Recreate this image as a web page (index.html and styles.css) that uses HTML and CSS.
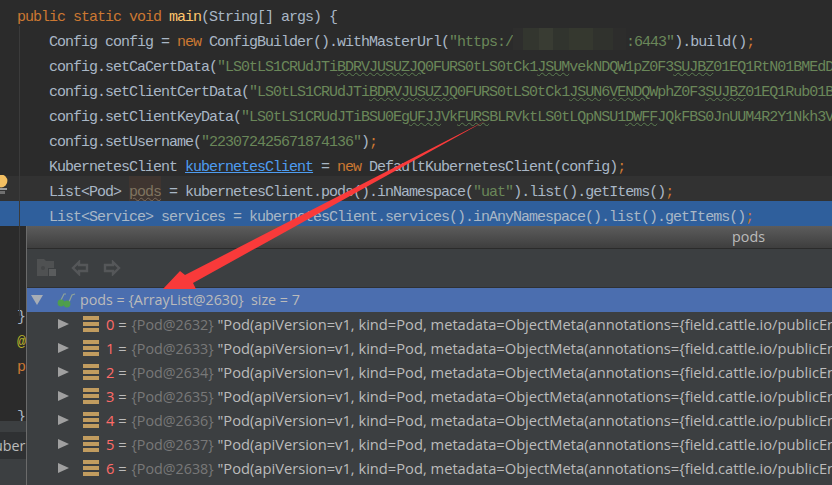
FILE: index.html
```html
<!DOCTYPE html>
<html lang="en">
<head>
<meta charset="utf-8">
<title>pods</title>
<link rel="stylesheet" href="styles.css">
</head>
<body>
<div class="screen">
  <div class="editor">
    <div class="line"><span class="kw">public static void</span> <span class="fn">main</span>(String[] args) {</div>
    <div class="line">    Config config = <span class="kw">new</span> ConfigBuilder().withMasterUrl(<span class="str">"https:/</span><span class="mosaic"></span><span class="str">:6443"</span>).build()<span class="kw">;</span></div>
    <div class="line">    config.setCaCertData(<span class="str">"LS0tLS1CRUdJTi<span class="wavy">BDRVJUSUZJQ</span>0FURS0tLS0tCk1<span class="wavy">JSUM</span>vekNDQW1pZ0F3<span class="wavy">SUJBZ</span>01EQ1RtN01BMEdDU3FHU0lb3DQE</span></div>
    <div class="line">    config.setClientCertData(<span class="str">"LS0tLS1CRUdJTi<span class="wavy">BDRVJUSUZJQ</span>0FURS0tLS0tCk1<span class="wavy">JSUN</span>6<span class="wavy">VENDQ</span>WphZ0F3<span class="wavy">SUJBZ</span>01EQ1Rub01BMEdDU3FHU0</span></div>
    <div class="line">    config.setClientKeyData(<span class="str">"LS0tLS1CRUdJTiBSU0Eg<span class="wavy">UFJJ</span>Vk<span class="wavy">FURS</span>BLRVktLS0tLQpNSU1<span class="wavy">DWFF</span>JQkFBS0JnUUM4R2Y1Nkh3VmZxQ</span></div>
    <div class="line">    config.setUsername(<span class="str">"223072425671874136"</span>)<span class="kw">;</span></div>
    <div class="line">    KubernetesClient <span class="link">kubernetesClient</span> = <span class="kw">new</span> DefaultKubernetesClient(config)<span class="kw">;</span></div>
    <div class="line caret">    List&lt;Pod&gt; <span class="unused">pods</span> = kubernetesClient.pods().inNamespace(<span class="str">"uat"</span>).list().getItems()<span class="kw">;</span></div>
    <div class="line selected">    List&lt;Service&gt; services = kubernetesClient.services().inAnyNamespace().list().getItems()<span class="kw">;</span></div>
    <div class="line"></div>
    <div class="line"></div>
    <div class="line"></div>
    <div class="line">}</div>
    <div class="line"><span class="anno">@</span></div>
    <div class="line"><span class="kw">p</span></div>
    <div class="line"></div>
    <div class="line closing">}</div>
    <div class="tabband"></div>
    <div class="tabrow">uber</div>
  </div>

  <div class="guide"></div>
  <svg class="bulb" width="8" height="20" viewBox="0 0 8 20" aria-hidden="true">
    <circle cx="1" cy="6" r="6.4" fill="#f3bf62"/>
    <rect x="-2" y="13" width="9" height="2" fill="#9b9b9b"/>
    <rect x="-2" y="16" width="7" height="3" fill="#6f6f6f"/>
  </svg>

  <section class="popup">
    <header class="popup-title">pods</header>
    <div class="toolbar">
      <svg class="tool" width="20" height="20" viewBox="0 0 20 20" aria-hidden="true">
        <path d="M0 1h7l2 2h8v7h-6v8H0z" fill="#4f5152"/>
        <circle cx="6" cy="10" r="2" fill="#444647"/>
        <rect x="12" y="11" width="7" height="7" fill="#5a5c5d"/>
      </svg>
      <svg class="tool" width="18" height="16" viewBox="0 0 18 16" aria-hidden="true">
        <path d="M8 2 2 8l6 6v-3h8V5H8z" fill="none" stroke="#555759" stroke-width="2.4"/>
      </svg>
      <svg class="tool" width="18" height="16" viewBox="0 0 18 16" aria-hidden="true">
        <path d="M10 2l6 6-6 6v-3H2V5h8z" fill="none" stroke="#555759" stroke-width="2.4"/>
      </svg>
    </div>
    <div class="tree">
      <div class="row root">
        <span class="tri down"></span>
        <svg class="glasses" width="20" height="18" viewBox="0 0 20 18" aria-hidden="true">
          <path d="M3 11 7 3h2M9 12l3-1 3-7 3-1" fill="none" stroke="#8fa39a" stroke-width="1.2"/>
          <circle cx="4" cy="12" r="3.4" fill="#4f9e4c"/>
          <circle cx="10" cy="13" r="3.4" fill="#4f9e4c"/>
        </svg>
        <span class="label">pods = {ArrayList@2630}&nbsp; size = 7</span>
      </div>
      <div class="row"><span class="tri"></span><span class="bars"></span><span class="label item"><span class="idx">0</span> = <span class="ref">{Pod@2632}</span> "Pod(apiVersion=v1, kind=Pod, metadata=ObjectMeta(annotations={field.cattle.io/publicEndpoints=[</span></div>
      <div class="row"><span class="tri"></span><span class="bars"></span><span class="label item"><span class="idx">1</span> = <span class="ref">{Pod@2633}</span> "Pod(apiVersion=v1, kind=Pod, metadata=ObjectMeta(annotations={field.cattle.io/publicEndpoints=[</span></div>
      <div class="row"><span class="tri"></span><span class="bars"></span><span class="label item"><span class="idx">2</span> = <span class="ref">{Pod@2634}</span> "Pod(apiVersion=v1, kind=Pod, metadata=ObjectMeta(annotations={field.cattle.io/publicEndpoints=[</span></div>
      <div class="row"><span class="tri"></span><span class="bars"></span><span class="label item"><span class="idx">3</span> = <span class="ref">{Pod@2635}</span> "Pod(apiVersion=v1, kind=Pod, metadata=ObjectMeta(annotations={field.cattle.io/publicEndpoints=[</span></div>
      <div class="row"><span class="tri"></span><span class="bars"></span><span class="label item"><span class="idx">4</span> = <span class="ref">{Pod@2636}</span> "Pod(apiVersion=v1, kind=Pod, metadata=ObjectMeta(annotations={field.cattle.io/publicEndpoints=[</span></div>
      <div class="row"><span class="tri"></span><span class="bars"></span><span class="label item"><span class="idx">5</span> = <span class="ref">{Pod@2637}</span> "Pod(apiVersion=v1, kind=Pod, metadata=ObjectMeta(annotations={field.cattle.io/publicEndpoints=[</span></div>
      <div class="row"><span class="tri"></span><span class="bars"></span><span class="label item"><span class="idx">6</span> = <span class="ref">{Pod@2638}</span> "Pod(apiVersion=v1, kind=Pod, metadata=ObjectMeta(annotations={field.cattle.io/publicEndpoints=[</span></div>
    </div>
  </section>

  <svg class="arrow" width="832" height="485" viewBox="0 0 832 485" aria-hidden="true">
    <polygon points="487,120 193,283 196,289 163,289 180,271 185,275" fill="#f93a3a"/>
  </svg>
</div>
</body>
</html>
```
FILE: styles.css
```css
* { box-sizing: border-box; }
html, body { margin: 0; height: 100%; overflow: hidden; background: #3c3f41; }
.screen { position: relative; width: 832px; height: 485px; overflow: hidden; background: #3c3f41; }

.editor { padding-top: 1px; background: #2b2b2b; font: 15px/25px "Liberation Mono", monospace; letter-spacing: -1px; color: #a9b7c6; height: 459px; border-bottom: 1px solid #444; }
.line { height: 25px; padding: 4px 0 0 17px; white-space: pre; overflow: hidden; }
.caret { background: #323232; }
.selected { background: #2f5f9c; }
.closing { height: 20px; }
.kw { color: #cc7832; }
.fn { color: #ffc66d; }
.str { color: #6a8759; }
.anno { color: #bbb529; }
.link { color: #4e9cf0; text-decoration: underline; }
.unused { color: #7f7460; background: #3f3530; height: 25px; line-height: 25px; vertical-align: top; text-decoration: underline wavy #7a6a5a 1px; display: inline-block; margin-top: -4px; padding-top: 4px; }
.wavy { text-decoration: underline wavy #5d7d52 1px; }
.mosaic { display: inline-block; width: 113px; height: 22px; vertical-align: top; margin-top: -2px; background: linear-gradient(90deg, #2e2e2d 0 10px, #33362f 10px 26px, #393c33 26px 40px, #31342e 40px 56px, #35382f 56px 80px, #30322d 80px 100px, #2d2d2c 100px); }

.tabband { height: 11px; background: #3c3f41; }
.tabrow { height: 27px; margin-left: -6px; font: 14.3px/27px "Open Sans", sans-serif; letter-spacing: 0; color: #bbbbbb; background: #2f3133; width: 32px; overflow: hidden; }

.guide { position: absolute; left: 19px; top: 26px; width: 1px; height: 290px; background: #3b3b3b; }
.bulb { position: absolute; left: 0; top: 175px; }

.popup { position: absolute; left: 26px; top: 226px; width: 806px; height: 259px; border-left: 1px solid #6b6b6b; background: #3c3f41; font: 14.3px/24px "Open Sans", sans-serif; color: #bbbbbb; }
.popup-title { height: 23px; padding-right: 67px; text-align: right; line-height: 22px; background: linear-gradient(#5c5c5c, #3e3e3e); border-bottom: 1px solid #2b2b2b; }
.toolbar { display: flex; align-items: center; height: 39px; padding-left: 10px; gap: 14px; border-bottom: 1px solid #2f3133; }

.tree { display: flex; flex-direction: column; }
.row { display: flex; align-items: center; height: 24px; padding-left: 31px; white-space: nowrap; overflow: hidden; }
.root { background: #4b6eaf; padding-left: 4px; }
.tri { width: 0; height: 0; border-style: solid; border-width: 5.5px 0 5.5px 11px; border-color: transparent transparent transparent #a0a0a0; margin-right: 14px; flex: none; }
.tri.down { border-width: 10px 6px 0 6px; border-color: #a8adb5 transparent transparent transparent; margin-right: 14px; }
.glasses { flex: none; margin-right: 3px; }
.bars { width: 16px; height: 16px; margin-right: 7px; flex: none; background: linear-gradient(#c19c5f 0 4px, #3c3f41 4px 6px, #c19c5f 6px 10px, #3c3f41 10px 12px, #c19c5f 12px 16px); }
.label { flex: none; }
.item { font-size: 14.7px; }
.idx { color: #ff6b68; }
.ref { color: #787878; font-size: 14.3px; margin-left: 1px; }

.arrow { position: absolute; left: 0; top: 0; pointer-events: none; }
```
